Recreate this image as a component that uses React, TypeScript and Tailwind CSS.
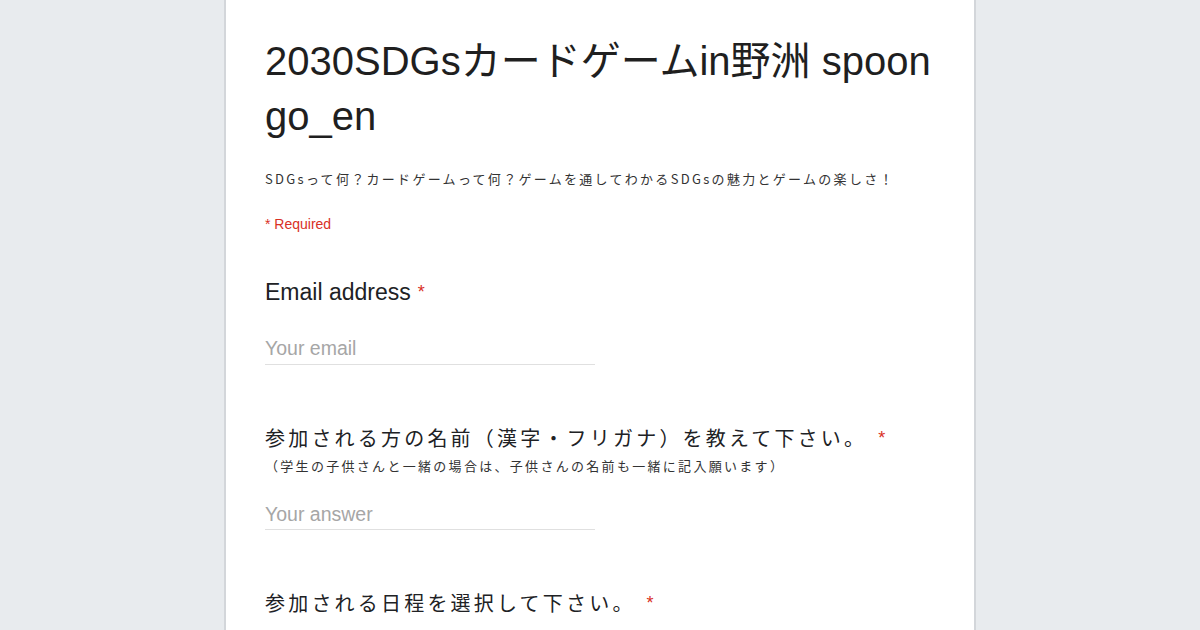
import React from "react";

function Star() {
  return (
    <span className="ml-[11px] align-top font-['Liberation_Sans',sans-serif] text-[18px] tracking-normal text-[#d93025]">
      *
    </span>
  );
}

function Input({ placeholder, className }: { placeholder: string; className: string }) {
  return (
    <div className={`${className} w-[330px] border-b border-[#e0e0e0] pb-[3.5px]`}>
      <div className="font-['Liberation_Sans',sans-serif] text-[19.5px] leading-[24px] text-[#a6a6a6]">
        {placeholder}
      </div>
    </div>
  );
}

export default function App() {
  return (
    <div className="flex h-[630px] w-[1200px] justify-center overflow-hidden bg-[#e8ebee]">
      <div className="h-full w-[752px] border-x-2 border-[#d3d6da] bg-white px-[39px] pt-[34px] text-[#202124]">
        <h1 className="font-['Liberation_Sans','Noto_Sans_CJK_JP',sans-serif] text-[40px] font-normal leading-[55px] text-[#1f1f1f]">
          2030SDGsカードゲームin野洲 spoon go_en
        </h1>
        <p className="mt-[25px] font-['Noto_Sans_CJK_JP','Liberation_Sans',sans-serif] text-[13px] leading-[20px] tracking-[2.3px] text-[#333]">
          SDGsって何？カードゲームって何？ゲームを通してわかるSDGsの魅力とゲームの楽しさ！
        </p>
        <div className="mt-[25px] font-['Liberation_Sans',sans-serif] text-[14px] leading-[20px] text-[#d93025]">
          * Required
        </div>

        <div className="mt-[44px] font-['Liberation_Sans',sans-serif] text-[23px] leading-[28px] text-[#202124]">
          Email address<span className="ml-[7px] align-top text-[18px] text-[#d93025]">*</span>
        </div>
        <Input placeholder="Your email" className="mt-[30px]" />

        <div className="mt-[59px] font-['Noto_Sans_CJK_JP','Liberation_Sans',sans-serif] text-[20px] leading-[28px] tracking-[3.2px] text-[#202124]">
          参加される方の名前（漢字・フリガナ）を教えて下さい。
          <Star />
        </div>
        <div className="mt-[5px] font-['Noto_Sans_CJK_JP','Liberation_Sans',sans-serif] text-[13px] leading-[18px] tracking-[2.3px] text-[#333]">
          （学生の子供さんと一緒の場合は、子供さんの名前も一緒に記入願います）
        </div>
        <Input placeholder="Your answer" className="mt-[27px]" />

        <div className="mt-[59px] font-['Noto_Sans_CJK_JP','Liberation_Sans',sans-serif] text-[20px] leading-[28px] tracking-[3.2px] text-[#202124]">
          参加される日程を選択して下さい。
          <Star />
        </div>
      </div>
    </div>
  );
}
